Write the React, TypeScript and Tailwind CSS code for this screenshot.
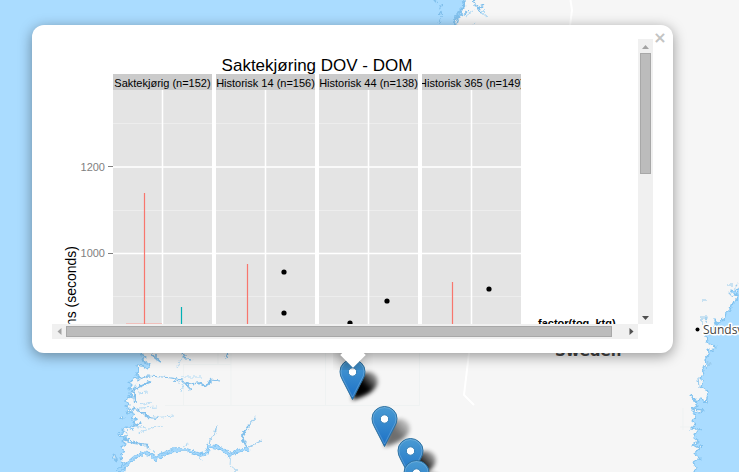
import { useRef } from "react";

const panels = [
  { x: 113, label: "Saktekjørig (n=152)" },
  { x: 216, label: "Historisk 14 (n=156)" },
  { x: 319, label: "Historisk 44 (n=138)" },
  { x: 422, label: "Historisk 365 (n=149)" },
];

const ranges = [
  { x: 144, top: 193, color: "#f8766d" },
  { x: 181, top: 307, color: "#00b0b5" },
  { x: 247, top: 264, color: "#f8766d" },
  { x: 452, top: 282, color: "#f8766d" },
];

const outliers = [
  [284, 272],
  [284, 313],
  [387, 301],
  [350, 323],
  [489, 289],
];

const markers = [
  { x: 352, y: 400, shade: 1 },
  { x: 384, y: 447, shade: 0.55 },
  { x: 410, y: 479, shade: 0.9 },
  { x: 416, y: 501, shade: 0.9 },
];

function MapBackground() {
  const west =
    "M-9 -9H466L463 3 465 7 460 10 462 14 456 17 454 21 456 26 430 60 160 340 142 352 143 355 146 357 142 359 144 362 150 364 148 369 143 366 137 365 138 371 136 375 140 377 133 379 129 382 132 385 129 389 133 391 130 394 133 398 128 396 126 401 129 404 125 407 131 409 126 412 134 414 132 418 138 419 132 421 136 425 131 427 133 430 126 427 122 430 125 433 118 434 119 437 124 436 127 439 122 441 126 444 121 447 124 451 121 456 122 462 126 464 123 481H-9Z";
  const east =
    "M748 284L736 289 737 292 731 290 734 295 738 294 736 300 731 305 730 310 726 312 725 317 721 322 716 324 715 320 719 323 712 330 705 335 708 339 707 343 717 347 711 351 707 349 709 354 705 359 706 365 702 368 704 374 700 378 703 381 701 387 706 390 708 394 706 403 701 398 697 402 694 398 690 395 697 406 692 409 704 410 699 413 693 411 695 417 692 421 696 424 691 429 701 429 696 432 694 438 699 442 693 445 700 449 694 453 700 459 693 463 696 468 693 481H748Z";
  const fjord =
    "M118 471L128 463 135 457 144 453 150 454 156 459 163 454 174 450 187 450 201 455 207 453 209 446 217 447 224 450 229 455 237 451 249 449";
  return (
    <svg className="absolute inset-0 size-full" viewBox="0 0 739 472" preserveAspectRatio="xMinYMin slice" aria-hidden="true">
      <defs>
        <filter id="rough" filterUnits="userSpaceOnUse" x="-9" y="-9" width="757" height="490">
          <feTurbulence type="fractalNoise" baseFrequency="0.300" numOctaves="2" seed="4" result="noise" />
          <feDisplacementMap in="SourceGraphic" in2="noise" scale="5" xChannelSelector="R" yChannelSelector="G" />
        </filter>
      </defs>
      <rect width="739" height="472" fill="#f6f6f6" />
      <g fill="none" stroke="#eff2f2" strokeWidth="1">
        <path d="M183.500 365V405M231 340V405M165 405.500H419.500V353M325.500 353V405M183 364.500H231M218 353V364" />
        <path d="M683 408V430M680 427H692" />
      </g>
      <path d="M570.500 0L572 10 570 26M469 353L464 395 474 405" fill="none" stroke="#fff" strokeWidth="2" />
      <g filter="url(#rough)">
        <g fill="#aadcff" stroke="#82c3f0" strokeWidth="1.300" strokeLinejoin="round">
          <path d={west} />
          <path d={east} />
        </g>
        <g fill="none" stroke="#82c0ec" strokeLinejoin="round">
          <path strokeWidth="3" strokeDasharray="2 2 1 3" d="M434 0L441 5 440 12 442 18 438 26" />
          <path strokeWidth="2.500" d="M463 0L465 6 461 10 458 14 454 22" />
          <path strokeWidth="1.600" d="M473 0L476 6 479 9 482 13M478 8L484 5M457 24L459 17 465 14 468 10M151 353L155 358 161 362M156 354V359M181 353L187 359 192 360M228 353L226 358M173 381L184 382 190 384 199 383M184 382L191 390" />
          <path strokeWidth="1.200" d="M137 380L148 376 162 377 172 378 182 380" />
          <path strokeWidth="2" d="M130 393L136 388 143 385 151 382M134 391L135 404M133 408L142 412 148 417 157 418M133 427L141 423M124 439L134 443 148 445M114 454L117 461" />
          <path strokeWidth="2" d="M199 383L205 386 209 384 210 380" />
          <path strokeWidth="1.200" d="M210 380L220 381" />
          <path strokeWidth="2" d="M248 448L244 442 242 436 246 430 250 424" />
        </g>
        <g fill="none" stroke="#b4dbf4" strokeWidth="1">
          <path d="M183 355L177 367M201 377H182M184 382L181 391M137 383L133 390M148 392L138 393M140 408L157 407M140 405L151 402M151 418L163 417 174 416M134 426L147 428M138 433L152 428 163 426M144 445L151 450M152 450L156 454M487 17L482 13 485 10M466 16L473 11 475 10M473 25L476 23M172 453L180 450M200 456L201 461M183 447L188 444M231 453L230 465 236 470" />
          <path stroke="#9accee" strokeWidth="1.200" d="M250 424L256 417M249 447L261 441M209 446L210 440 215 433 217 426M236 469V476M701 300H706M702 318V324M708 361L710 365 706 367M698 378L699 387M727 285H733M728 292L733 297M735 287L738 284M700 317H707L706 323" />
        </g>
        <path d={fjord} fill="none" stroke="#82c3f0" strokeWidth="3.600" />
        <path d={fjord} fill="none" stroke="#a5d8fc" strokeWidth="1.800" />
        <g fill="#f6f6f6" stroke="#82c3f0" strokeWidth="1">
          <path d="M124 431L128 433 126 437 121 436ZM129 438L132 441 128 443ZM113 455L116 457 115 461ZM705 365L708 364 707 369ZM700 444L702 446 699 449ZM129 408L134 410 132 414ZM120 418L122 416 123 419Z" />
        </g>
      </g>
      <g stroke="#fff" strokeLinejoin="round" paintOrder="stroke">
        <text x="555" y="356" fontFamily="'DejaVu Sans', sans-serif" fontSize="15" fontWeight="700" fill="#444" strokeWidth="1">Sweden</text>
        <text x="703" y="334" fontFamily="'Open Sans', sans-serif" fontSize="12" fill="#444" strokeWidth="3">Sundsvall</text>
      </g>
      <circle cx="697.500" cy="329.500" r="2" />
    </svg>
  );
}

function Markers() {
  return (
    <svg className="absolute inset-0 size-full" viewBox="0 0 739 472" preserveAspectRatio="xMinYMin slice" role="img" aria-label="Stations on the map">
      <defs>
        <linearGradient id="pin" x1="0" y1="0" x2="0" y2="1">
          <stop offset="0" stopColor="#4a9bd3" />
          <stop offset="1" stopColor="#1b70c6" />
        </linearGradient>
        <linearGradient id="shade" x1="0" y1="1" x2="1" y2="0">
          <stop offset="0.500" stopColor="#000" />
          <stop offset="1" stopColor="#000" stopOpacity="0.150" />
        </linearGradient>
        <filter id="soft" x="-30%" y="-30%" width="160%" height="160%">
          <feGaussianBlur stdDeviation="2" />
        </filter>
      </defs>
      {markers.map((m) => (
        <path
          key={m.y}
          transform={`translate(${m.x} ${m.y})`}
          opacity={m.shade}
          d="M0 0L5 -22Q9 -29 18 -28Q28 -25 25 -15Q20 -5 0 0Z"
          fill="url(#shade)"
          filter="url(#soft)"
        />
      ))}
      {markers.map((m) => (
        <g key={m.y} transform={`translate(${m.x} ${m.y})`}>
          <path d="M.5 -.5L-9.500 -20Q-12 -24 -12 -28.500A12.500 12 0 0 1 13 -28.500Q13 -24 10.500 -20Z" fill="url(#pin)" stroke="#2b6f9f" strokeWidth="1" />
          <path d="M.5 -3L-8.500 -20.500Q-11 -24 -11 -28.500A11.500 11 0 0 1 12 -28.500Q12 -24 9.500 -20.500Z" fill="none" stroke="#fff" strokeOpacity="0.180" />
          <circle cx=".5" cy="-28" r="4.200" fill="#fff" stroke="#2e7cb6" strokeWidth="1" />
        </g>
      ))}
    </svg>
  );
}

function DelayChart() {
  return (
    <svg
      className="block h-[600px] w-[632px] max-w-none"
      viewBox="52 39 632 600"
      fontFamily="'Liberation Sans', Arial, sans-serif"
      role="img"
      aria-label="Saktekjøring DOV - DOM"
    >
      <text x="317" y="71" fontSize="17" textAnchor="middle">Saktekjøring DOV - DOM</text>
      {panels.map((p) => (
        <svg key={p.x} x={p.x} y="74" width="99" height="565" viewBox="0 0 99 565">
          <rect width="99" height="565" fill="#e4e4e4" />
          <rect width="99" height="16" fill="#cbcbcb" />
          <path d="M0 49.500H99M0 136.500H99M0 222.500H99" stroke="#ededed" />
          <path d="M0 93H99M0 179.500H99M49.500 16V565" stroke="#fff" strokeWidth="1.500" />
          <text x="49.500" y="13" fontSize="11" textAnchor="middle">{p.label}</text>
        </svg>
      ))}
      <g fill="#7f7f7f" fontSize="11" textAnchor="end">
        <text x="105" y="171">1200</text>
        <text x="105" y="257">1000</text>
      </g>
      <path d="M108 166.500H113M108 253.500H113" stroke="#7f7f7f" />
      <text transform="translate(76 246) rotate(-90)" fontSize="14" textAnchor="end">ons (seconds)</text>
      <path d="M126 323.500H162" stroke="#f0c0bc" />
      {ranges.map((r) => (
        <path key={r.x} d={`M${r.x + 0.5} ${r.top}V639`} stroke={r.color} strokeWidth="1.200" />
      ))}
      {outliers.map(([x, y]) => (
        <circle key={`${x}-${y}`} cx={x} cy={y} r="2.600" />
      ))}
      <text x="538" y="327" fontSize="11" fontWeight="700">factor(tog_ktg)</text>
    </svg>
  );
}

function Arrow({ d, color }: { d: string; color: string }) {
  return (
    <svg className="size-[7px]" viewBox="0 0 7 7" aria-hidden="true">
      <path d={d} fill={color} />
    </svg>
  );
}

export default function App() {
  const view = useRef<HTMLDivElement>(null);
  const scroll = (left: number, top: number) => view.current?.scrollBy({ left, top });
  const step = "flex shrink-0 items-center justify-center";

  return (
    <main className="relative h-screen overflow-hidden bg-[#f6f6f6] font-['Liberation_Sans',Arial,sans-serif]">
      <MapBackground />
      <Markers />
      <section aria-label="Station details" className="absolute top-[25px] left-8 w-[641px]">
        <div className="absolute -bottom-[17px] left-1/2 h-[17px] w-10 -translate-x-1/2 overflow-hidden">
          <div className="mx-auto -mt-[7px] size-[18px] rotate-45 bg-white shadow-[0_3px_14px_rgba(0,0,0,0.4)]" />
        </div>
        <div className="rounded-xl bg-white px-5 py-3.5 shadow-[0_3px_14px_rgba(0,0,0,0.4)]">
          <div className="grid grid-cols-[minmax(0,1fr)_15px] grid-rows-[285px_15px]">
            <div ref={view} className="overflow-hidden">
              <DelayChart />
            </div>
            <div className="flex flex-col bg-[#f0f0f0]">
              <button type="button" aria-label="Scroll up" className={`${step} h-3.5`} onClick={() => scroll(0, -40)}>
                <Arrow d="M0 6L3.500 2 7 6Z" color="#a3a3a3" />
              </button>
              <div className="flex-1 px-0.5">
                <div className="h-[121px] border border-[#a8a8a8] bg-[#bcbcbc]" />
              </div>
              <button type="button" aria-label="Scroll down" className={`${step} h-3.5`} onClick={() => scroll(0, 40)}>
                <Arrow d="M0 2L3.500 6 7 2Z" color="#505050" />
              </button>
            </div>
            <div className="flex bg-[#f0f0f0]">
              <button type="button" aria-label="Scroll left" className={`${step} w-3.5`} onClick={() => scroll(-40, 0)}>
                <Arrow d="M5.500 0L1.500 3.500 5.500 7Z" color="#a3a3a3" />
              </button>
              <div className="flex-1 py-0.5 pr-3">
                <div className="h-full border border-[#a8a8a8] bg-[#bcbcbc]" />
              </div>
              <button type="button" aria-label="Scroll right" className={`${step} w-3.5`} onClick={() => scroll(40, 0)}>
                <Arrow d="M1.500 0L5.500 3.500 1.500 7Z" color="#505050" />
              </button>
            </div>
          </div>
        </div>
        <button type="button" aria-label="Close popup" className="absolute top-1 right-1 flex size-[18px] items-center justify-center font-['DejaVu_Sans',sans-serif] text-base leading-4 font-bold text-[#c3c3c3]">
          ×
        </button>
      </section>
    </main>
  );
}
